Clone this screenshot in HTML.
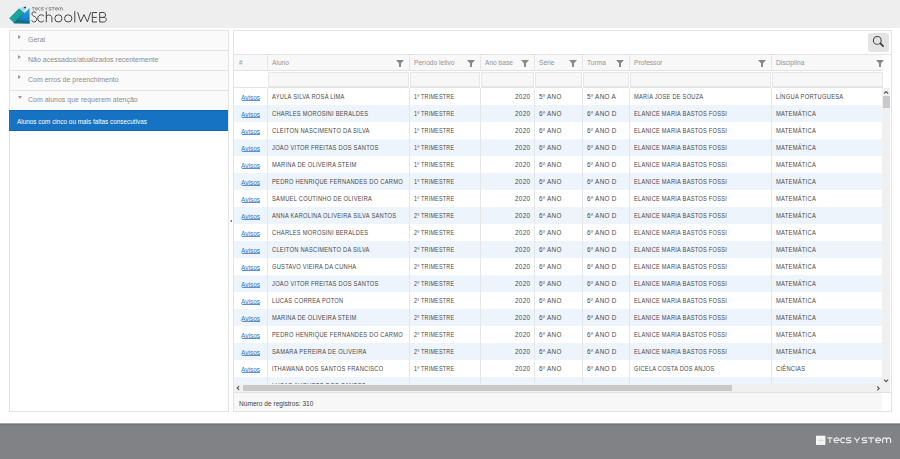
<!DOCTYPE html><html><head><meta charset="utf-8"><style>*{margin:0;padding:0;box-sizing:border-box}
html,body{width:900px;height:459px;overflow:hidden;background:#fff;font-family:"Liberation Sans",sans-serif;position:relative}
#hdr{position:absolute;left:0;top:0;width:900px;height:28px;background:#eeeeee}
#hdr svg{position:absolute;left:0;top:0}
#ts{position:absolute;left:32px;top:6px;font-size:4px;letter-spacing:0.6px;color:#555;line-height:5px}
#sw{position:absolute;left:31px;top:8px;font-size:15px;line-height:17px;color:#444;letter-spacing:-0.3px}
#sw span{margin-left:2px}
#lp{position:absolute;left:9px;top:30px;width:220px;height:382px;border:1px solid #e3e3e3;background:#fff}
.it{position:absolute;left:0;width:218px;height:20px;background:#fafafa;border-bottom:1px solid #e3e3e3;font-size:8px;color:#8c8c8c;line-height:19px}
.it span{position:absolute;left:18px;top:-1px;white-space:nowrap;transform:scaleX(0.875);transform-origin:0 50%}
.it i{position:absolute;left:8px;top:4px;width:0;height:0}
.it i.rt{border-left:3.2px solid #9a9a9a;border-top:2.85px solid transparent;border-bottom:2.85px solid transparent}
.it i.dn{top:4.6px;left:8px;border-top:3.1px solid #9a9a9a;border-left:2.7px solid transparent;border-right:2.7px solid transparent}
.sel{position:absolute;left:-1px;top:79px;width:219px;height:21px;background:#1672c2;border-top:1px solid #1266b4;border-bottom:1px solid #1266b4;color:#fff;font-size:6.4px;line-height:19px;padding-left:8px;padding-top:1px}
#spl{position:absolute;left:229.5px;top:220.3px;width:0;height:0;border-right:2.6px solid #444;border-top:1.5px solid transparent;border-bottom:1.5px solid transparent}
#rp{position:absolute;left:233px;top:30px;width:659px;height:382px;border:1px solid #e3e3e3;background:#fff}
#srch{position:absolute;left:634px;top:2px;width:21px;height:19px;background:#e4e4e4;border-radius:3px}
#srch svg{position:absolute;left:0;top:0}
.hc{position:absolute;top:54px;height:17px;background:#f8f8f8;border-top:1px solid #e2e2e2;border-bottom:1px solid #e2e2e2;font-size:6.9px;color:#939393;line-height:15px;padding-left:4px;white-space:nowrap}
.hc span{display:inline-block;transform:scaleX(0.96);transform-origin:0 50%}
.fl{position:absolute;top:5px;width:8px;height:7px;background:#868686;clip-path:polygon(0 0,100% 0,62% 45%,62% 100%,38% 100%,38% 45%)}
.fc{position:absolute;top:71px;height:17px;border-bottom:1px solid #e2e2e2}
.fc::after{content:"";position:absolute;left:0;right:0;top:1px;bottom:0;background:#f7f7f7;border:1px solid #e7e7e7}
.fc.e::after{display:none}
.vs{position:absolute;top:0;width:1px;height:296px;background:#e6e6e6}
.vs.h{top:54px;height:17px;background:#e6e6e6}
#body{position:absolute;left:234px;top:88px;width:648px;height:296px;overflow:hidden}
.row{position:absolute;left:0;width:648px;height:17px;background:#fff}
.row.alt{background:#edf4fb}
.row a{position:absolute;top:0;height:17px;text-align:center;color:#2f74c4;text-decoration:none;font-size:6.5px;line-height:17px;padding-top:1px}
.row a::after{content:'';position:absolute;left:8px;width:18px;top:12px;height:0.8px;background:#5a8fd0}
.c{position:absolute;top:0;height:17px;font-size:6.8px;line-height:17px;color:#484848;padding-left:4px;white-space:nowrap;overflow:hidden}
.c span{display:inline-block;letter-spacing:0.3px;transform:scaleX(0.9);transform-origin:0 50%}
.c.r{text-align:right;padding-left:0;padding-right:4px}
.c.r span{transform-origin:100% 50%}
#vsb{position:absolute;left:882px;top:88px;width:8px;height:304px;background:#f0f0f0}
#vsb .th{position:absolute;left:1px;top:8px;width:7px;height:12px;background:#c9c9c9}
#hsb{position:absolute;left:234px;top:384px;width:648px;height:8px;background:#f0f0f0}
#hsb .th{position:absolute;left:9px;top:1px;width:489px;height:6px;background:#c9c9c9}
#ftr{position:absolute;left:234px;top:392px;width:657px;height:19px;background:linear-gradient(90deg,#f7f7f7 648px,#fff 648px);border-top:1px solid #e2e2e2;font-size:6.6px;color:#444;line-height:19px;padding-left:5px;padding-top:1px}
#pf{position:absolute;left:0;top:423px;width:900px;height:36px;background:linear-gradient(180deg,#a6a7a9 0,#a6a7a9 1px,#747578 1px,#747578 2px,#818286 2px)}
#tsq{position:absolute;left:816px;top:12px;width:10px;height:10px;background:#f2f2f2}
#tst{position:absolute;left:829px;top:12px;font-size:9px;line-height:10px;color:#e8e8e8;letter-spacing:0.8px}

#tbl{position:absolute;left:234px;top:54px;width:657px;height:1px;background:#e2e2e2}
#vsb i{position:absolute;left:2px;width:4px;height:4px;border-left:1.2px solid #555;border-top:1.2px solid #555}
#vsb i.up{top:3px;transform:rotate(45deg)}
#vsb i.dn2{top:290px;transform:rotate(225deg)}
#hsb i{position:absolute;top:2px;width:4px;height:4px;border-left:1.2px solid #555;border-top:1.2px solid #555}
#hsb i.lf{left:3px;transform:rotate(-45deg)}
#hsb i.rg{left:642px;transform:rotate(135deg)}

#ov{position:absolute;left:0;top:0;pointer-events:none}
</style></head><body>
<div id="hdr"><svg width="120" height="28" viewBox="0 0 120 28" style="position:absolute;left:0;top:0">
<defs><linearGradient id="bg1" x1="0" y1="0" x2="0" y2="1"><stop offset="0" stop-color="#27a6e8"/><stop offset="1" stop-color="#0e6fbf"/></linearGradient></defs>
<polygon points="13.6,23.2 24.6,12.9 29.6,8 29.6,23.4" fill="url(#bg1)"/>
<polygon points="13.6,23.2 16.5,20.4 22,20.3 29.6,20.9 29.6,23.4" fill="#126e80"/>
<polygon points="9.2,18.2 19.1,8.2 24.4,12.8 14,22.9" fill="#18a39c"/>
<path d="M24.4,12.8 L14,22.9" stroke="#0b4d5a" stroke-width="0.7"/>
<polygon points="19.2,8.1 25.5,6.8 24.5,12.8" fill="#a5dcf5"/>
<polygon points="23.4,7.2 26.2,6.6 25.5,8.7" fill="#0b3438"/>
<g fill="none" stroke="#383838" stroke-width="0.92">
<path d="M36.3,13.1 C35.8,12.2 35,11.8 34,11.8 C32.8,11.8 32,12.6 32,13.8 C32,15.2 33.1,15.8 34.3,16.4 C35.7,17.1 36.6,17.9 36.6,19.5 C36.6,21 35.5,21.9 34.1,21.9 C32.9,21.9 32,21.2 31.6,20.2"/>
<path d="M44,16.2 A3.5,3.6 0 1 0 44,20.6"/>
<path d="M46.3,11.2 V22.3 M46.3,17.6 C46.3,15.9 47.4,15 48.9,15 C50.6,15 51.9,15.9 51.9,17.9 V22.3"/>
<ellipse cx="58.4" cy="18.4" rx="3.6" ry="3.6"/>
<ellipse cx="68.2" cy="18.4" rx="3.7" ry="3.6"/>
<path d="M74.8,11.2 V22.4"/>
<path d="M77.7,12.2 L80.7,21.9 L84,14.6 L87.4,21.9 L90.7,12.2"/>
<path d="M97,12.5 H92.3 V22 H97 M92.3,17.4 H96.8"/>
<path d="M99.7,12.5 V22 H103.2 C105.2,22 106.3,21 106.3,19.5 C106.3,18.1 105.2,17.4 103.3,17.4 H99.7 M103,17.4 C104.6,17.4 105.5,16.5 105.5,15 C105.5,13.4 104.5,12.5 103,12.5 H99.7"/>
</g>
<g fill="none" stroke="#6a6a6a" stroke-width="0.62" transform="matrix(0.482 0 0 0.55 -366.76 -233.29)"><path vector-effect="non-scaling-stroke" d="M827.3,437.8 H832.5 M829.9,437.8 V443.1"/><path vector-effect="non-scaling-stroke" d="M834,440.3 H839.1 A2.55,2.45 0 1 0 838.3,442.1"/><path vector-effect="non-scaling-stroke" d="M844.9,438.6 A2.45,2.45 0 1 0 844.9,441.9"/><path vector-effect="non-scaling-stroke" d="M851.1,437.8 H847.9 C846.9,437.8 846.3,438.4 846.3,439.1 C846.3,439.8 846.9,440.3 847.9,440.3 H849.6 C850.6,440.3 851.1,440.9 851.1,441.5 C851.1,442.1 850.6,442.6 849.6,442.6 H846.1"/><path vector-effect="non-scaling-stroke" d="M854.2,437.6 L857,440.6 L859.8,437.6 M857,440.6 V443.1"/><path vector-effect="non-scaling-stroke" d="M866.9,437.8 H863.7 C862.7,437.8 862.1,438.4 862.1,439.1 C862.1,439.8 862.7,440.3 863.7,440.3 H865.4 C866.4,440.3 866.9,440.9 866.9,441.5 C866.9,442.1 866.4,442.6 865.4,442.6 H861.9"/><path vector-effect="non-scaling-stroke" d="M868,437.8 H874.3 M871.1,437.8 V443.1"/><path vector-effect="non-scaling-stroke" d="M875.6,440.3 H880.7 A2.55,2.45 0 1 0 879.9,442.1"/><path vector-effect="non-scaling-stroke" d="M882.6,443.1 V440.1 C882.6,438.7 883.4,437.8 884.6,437.8 C885.8,437.8 886.6,438.7 886.6,440.1 V443.1 M886.6,440.1 C886.6,438.7 887.4,437.8 888.6,437.8 C889.8,437.8 890.6,438.7 890.6,440.1 V443.1"/></g>
</svg>
</div>
<div id="lp">
<div class="it" style="top:0px"><i class="rt"></i><span>Geral</span></div>
<div class="it" style="top:20px"><i class="rt"></i><span>Não acessados/atualizados recentemente</span></div>
<div class="it" style="top:40px"><i class="rt"></i><span>Com erros de preenchimento</span></div>
<div class="it" style="top:60px"><i class="dn"></i><span>Com alunos que requerem atenção</span></div>
<div class="sel">Alunos com cinco ou mais faltas consecutivas</div>
</div>
<div id="spl"></div>
<div id="rp">
<div id="srch"><svg width="21" height="19" viewBox="0 0 21 19"><circle cx="9.3" cy="7.4" r="3.9" fill="none" stroke="#444" stroke-width="1.05"/><path d="M7,5.6 A2.4,2.4 0 0 1 8.6,4.9" stroke="#aaa" stroke-width="0.7" fill="none"/><path d="M12.4,10.4 L15.1,13.1" stroke="#3a3a3a" stroke-width="1.7" stroke-linecap="round"/></svg></div>
</div>
<div class="hc" style="left:234px;width:33px;padding-left:5px;font-size:6.4px"><span>#</span></div>
<div class="fc e" style="left:234px;width:33px"></div>
<div class="hc" style="left:268px;width:141px"><span>Aluno</span><b class="fl" style="left:128px"></b></div>
<div class="fc" style="left:268px;width:141px"></div>
<div class="hc" style="left:410px;width:70px"><span>Período letivo</span><b class="fl" style="left:57px"></b></div>
<div class="fc" style="left:410px;width:70px"></div>
<div class="hc" style="left:481px;width:53px"><span>Ano base</span><b class="fl" style="left:40px"></b></div>
<div class="fc" style="left:481px;width:53px"></div>
<div class="hc" style="left:535px;width:47px"><span>Série</span><b class="fl" style="left:34px"></b></div>
<div class="fc" style="left:535px;width:47px"></div>
<div class="hc" style="left:583px;width:46px"><span>Turma</span><b class="fl" style="left:33px"></b></div>
<div class="fc" style="left:583px;width:46px"></div>
<div class="hc" style="left:630px;width:141px"><span>Professor</span><b class="fl" style="left:128px"></b></div>
<div class="fc" style="left:630px;width:141px"></div>
<div class="hc" style="left:772px;width:111px"><span>Disciplina</span><b class="fl" style="left:104px"></b></div>
<div class="fc" style="left:772px;width:111px"></div>
<div class="vs h" style="left:267px"></div>
<div class="vs h" style="left:409px"></div>
<div class="vs h" style="left:480px"></div>
<div class="vs h" style="left:534px"></div>
<div class="vs h" style="left:582px"></div>
<div class="vs h" style="left:629px"></div>
<div class="vs h" style="left:771px"></div>
<div id="body">
<div class="row" style="top:0px">
<a style="left:0;width:33px">Avisos</a>
<div class="c" style="left:34px;width:141px"><span style="transform:scaleX(0.845)">AYULA SILVA ROSA LIMA</span></div>
<div class="c" style="left:176px;width:70px"><span style="transform:scaleX(0.79)">1º TRIMESTRE</span></div>
<div class="c r" style="left:247px;width:53px"><span style="transform:scaleX(0.94)">2020</span></div>
<div class="c" style="left:301px;width:47px"><span style="transform:scaleX(0.93)">5º ANO</span></div>
<div class="c" style="left:349px;width:46px"><span style="transform:scaleX(0.935)">5º ANO A</span></div>
<div class="c" style="left:396px;width:141px"><span style="transform:scaleX(0.835)">MARIA JOSE DE SOUZA</span></div>
<div class="c" style="left:538px;width:110px"><span style="transform:scaleX(0.85)">LÍNGUA PORTUGUESA</span></div>
</div>
<div class="row alt" style="top:17px">
<a style="left:0;width:33px">Avisos</a>
<div class="c" style="left:34px;width:141px"><span style="transform:scaleX(0.845)">CHARLES MOROSINI BERALDES</span></div>
<div class="c" style="left:176px;width:70px"><span style="transform:scaleX(0.79)">1º TRIMESTRE</span></div>
<div class="c r" style="left:247px;width:53px"><span style="transform:scaleX(0.94)">2020</span></div>
<div class="c" style="left:301px;width:47px"><span style="transform:scaleX(0.93)">6º ANO</span></div>
<div class="c" style="left:349px;width:46px"><span style="transform:scaleX(0.935)">6º ANO D</span></div>
<div class="c" style="left:396px;width:141px"><span style="transform:scaleX(0.835)">ELANICE MARIA BASTOS FOSSI</span></div>
<div class="c" style="left:538px;width:110px"><span style="transform:scaleX(0.85)">MATEMÁTICA</span></div>
</div>
<div class="row" style="top:34px">
<a style="left:0;width:33px">Avisos</a>
<div class="c" style="left:34px;width:141px"><span style="transform:scaleX(0.845)">CLEITON NASCIMENTO DA SILVA</span></div>
<div class="c" style="left:176px;width:70px"><span style="transform:scaleX(0.79)">1º TRIMESTRE</span></div>
<div class="c r" style="left:247px;width:53px"><span style="transform:scaleX(0.94)">2020</span></div>
<div class="c" style="left:301px;width:47px"><span style="transform:scaleX(0.93)">6º ANO</span></div>
<div class="c" style="left:349px;width:46px"><span style="transform:scaleX(0.935)">6º ANO D</span></div>
<div class="c" style="left:396px;width:141px"><span style="transform:scaleX(0.835)">ELANICE MARIA BASTOS FOSSI</span></div>
<div class="c" style="left:538px;width:110px"><span style="transform:scaleX(0.85)">MATEMÁTICA</span></div>
</div>
<div class="row alt" style="top:51px">
<a style="left:0;width:33px">Avisos</a>
<div class="c" style="left:34px;width:141px"><span style="transform:scaleX(0.845)">JOAO VITOR FREITAS DOS SANTOS</span></div>
<div class="c" style="left:176px;width:70px"><span style="transform:scaleX(0.79)">1º TRIMESTRE</span></div>
<div class="c r" style="left:247px;width:53px"><span style="transform:scaleX(0.94)">2020</span></div>
<div class="c" style="left:301px;width:47px"><span style="transform:scaleX(0.93)">6º ANO</span></div>
<div class="c" style="left:349px;width:46px"><span style="transform:scaleX(0.935)">6º ANO D</span></div>
<div class="c" style="left:396px;width:141px"><span style="transform:scaleX(0.835)">ELANICE MARIA BASTOS FOSSI</span></div>
<div class="c" style="left:538px;width:110px"><span style="transform:scaleX(0.85)">MATEMÁTICA</span></div>
</div>
<div class="row" style="top:68px">
<a style="left:0;width:33px">Avisos</a>
<div class="c" style="left:34px;width:141px"><span style="transform:scaleX(0.845)">MARINA DE OLIVEIRA STEIM</span></div>
<div class="c" style="left:176px;width:70px"><span style="transform:scaleX(0.79)">1º TRIMESTRE</span></div>
<div class="c r" style="left:247px;width:53px"><span style="transform:scaleX(0.94)">2020</span></div>
<div class="c" style="left:301px;width:47px"><span style="transform:scaleX(0.93)">6º ANO</span></div>
<div class="c" style="left:349px;width:46px"><span style="transform:scaleX(0.935)">6º ANO D</span></div>
<div class="c" style="left:396px;width:141px"><span style="transform:scaleX(0.835)">ELANICE MARIA BASTOS FOSSI</span></div>
<div class="c" style="left:538px;width:110px"><span style="transform:scaleX(0.85)">MATEMÁTICA</span></div>
</div>
<div class="row alt" style="top:85px">
<a style="left:0;width:33px">Avisos</a>
<div class="c" style="left:34px;width:141px"><span style="transform:scaleX(0.845)">PEDRO HENRIQUE FERNANDES DO CARMO</span></div>
<div class="c" style="left:176px;width:70px"><span style="transform:scaleX(0.79)">1º TRIMESTRE</span></div>
<div class="c r" style="left:247px;width:53px"><span style="transform:scaleX(0.94)">2020</span></div>
<div class="c" style="left:301px;width:47px"><span style="transform:scaleX(0.93)">6º ANO</span></div>
<div class="c" style="left:349px;width:46px"><span style="transform:scaleX(0.935)">6º ANO D</span></div>
<div class="c" style="left:396px;width:141px"><span style="transform:scaleX(0.835)">ELANICE MARIA BASTOS FOSSI</span></div>
<div class="c" style="left:538px;width:110px"><span style="transform:scaleX(0.85)">MATEMÁTICA</span></div>
</div>
<div class="row" style="top:102px">
<a style="left:0;width:33px">Avisos</a>
<div class="c" style="left:34px;width:141px"><span style="transform:scaleX(0.845)">SAMUEL COUTINHO DE OLIVEIRA</span></div>
<div class="c" style="left:176px;width:70px"><span style="transform:scaleX(0.79)">1º TRIMESTRE</span></div>
<div class="c r" style="left:247px;width:53px"><span style="transform:scaleX(0.94)">2020</span></div>
<div class="c" style="left:301px;width:47px"><span style="transform:scaleX(0.93)">6º ANO</span></div>
<div class="c" style="left:349px;width:46px"><span style="transform:scaleX(0.935)">6º ANO D</span></div>
<div class="c" style="left:396px;width:141px"><span style="transform:scaleX(0.835)">ELANICE MARIA BASTOS FOSSI</span></div>
<div class="c" style="left:538px;width:110px"><span style="transform:scaleX(0.85)">MATEMÁTICA</span></div>
</div>
<div class="row alt" style="top:119px">
<a style="left:0;width:33px">Avisos</a>
<div class="c" style="left:34px;width:141px"><span style="transform:scaleX(0.845)">ANNA KAROLINA OLIVEIRA SILVA SANTOS</span></div>
<div class="c" style="left:176px;width:70px"><span style="transform:scaleX(0.79)">2º TRIMESTRE</span></div>
<div class="c r" style="left:247px;width:53px"><span style="transform:scaleX(0.94)">2020</span></div>
<div class="c" style="left:301px;width:47px"><span style="transform:scaleX(0.93)">6º ANO</span></div>
<div class="c" style="left:349px;width:46px"><span style="transform:scaleX(0.935)">6º ANO D</span></div>
<div class="c" style="left:396px;width:141px"><span style="transform:scaleX(0.835)">ELANICE MARIA BASTOS FOSSI</span></div>
<div class="c" style="left:538px;width:110px"><span style="transform:scaleX(0.85)">MATEMÁTICA</span></div>
</div>
<div class="row" style="top:136px">
<a style="left:0;width:33px">Avisos</a>
<div class="c" style="left:34px;width:141px"><span style="transform:scaleX(0.845)">CHARLES MOROSINI BERALDES</span></div>
<div class="c" style="left:176px;width:70px"><span style="transform:scaleX(0.79)">2º TRIMESTRE</span></div>
<div class="c r" style="left:247px;width:53px"><span style="transform:scaleX(0.94)">2020</span></div>
<div class="c" style="left:301px;width:47px"><span style="transform:scaleX(0.93)">6º ANO</span></div>
<div class="c" style="left:349px;width:46px"><span style="transform:scaleX(0.935)">6º ANO D</span></div>
<div class="c" style="left:396px;width:141px"><span style="transform:scaleX(0.835)">ELANICE MARIA BASTOS FOSSI</span></div>
<div class="c" style="left:538px;width:110px"><span style="transform:scaleX(0.85)">MATEMÁTICA</span></div>
</div>
<div class="row alt" style="top:153px">
<a style="left:0;width:33px">Avisos</a>
<div class="c" style="left:34px;width:141px"><span style="transform:scaleX(0.845)">CLEITON NASCIMENTO DA SILVA</span></div>
<div class="c" style="left:176px;width:70px"><span style="transform:scaleX(0.79)">2º TRIMESTRE</span></div>
<div class="c r" style="left:247px;width:53px"><span style="transform:scaleX(0.94)">2020</span></div>
<div class="c" style="left:301px;width:47px"><span style="transform:scaleX(0.93)">6º ANO</span></div>
<div class="c" style="left:349px;width:46px"><span style="transform:scaleX(0.935)">6º ANO D</span></div>
<div class="c" style="left:396px;width:141px"><span style="transform:scaleX(0.835)">ELANICE MARIA BASTOS FOSSI</span></div>
<div class="c" style="left:538px;width:110px"><span style="transform:scaleX(0.85)">MATEMÁTICA</span></div>
</div>
<div class="row" style="top:170px">
<a style="left:0;width:33px">Avisos</a>
<div class="c" style="left:34px;width:141px"><span style="transform:scaleX(0.845)">GUSTAVO VIEIRA DA CUNHA</span></div>
<div class="c" style="left:176px;width:70px"><span style="transform:scaleX(0.79)">2º TRIMESTRE</span></div>
<div class="c r" style="left:247px;width:53px"><span style="transform:scaleX(0.94)">2020</span></div>
<div class="c" style="left:301px;width:47px"><span style="transform:scaleX(0.93)">6º ANO</span></div>
<div class="c" style="left:349px;width:46px"><span style="transform:scaleX(0.935)">6º ANO D</span></div>
<div class="c" style="left:396px;width:141px"><span style="transform:scaleX(0.835)">ELANICE MARIA BASTOS FOSSI</span></div>
<div class="c" style="left:538px;width:110px"><span style="transform:scaleX(0.85)">MATEMÁTICA</span></div>
</div>
<div class="row alt" style="top:187px">
<a style="left:0;width:33px">Avisos</a>
<div class="c" style="left:34px;width:141px"><span style="transform:scaleX(0.845)">JOAO VITOR FREITAS DOS SANTOS</span></div>
<div class="c" style="left:176px;width:70px"><span style="transform:scaleX(0.79)">2º TRIMESTRE</span></div>
<div class="c r" style="left:247px;width:53px"><span style="transform:scaleX(0.94)">2020</span></div>
<div class="c" style="left:301px;width:47px"><span style="transform:scaleX(0.93)">6º ANO</span></div>
<div class="c" style="left:349px;width:46px"><span style="transform:scaleX(0.935)">6º ANO D</span></div>
<div class="c" style="left:396px;width:141px"><span style="transform:scaleX(0.835)">ELANICE MARIA BASTOS FOSSI</span></div>
<div class="c" style="left:538px;width:110px"><span style="transform:scaleX(0.85)">MATEMÁTICA</span></div>
</div>
<div class="row" style="top:204px">
<a style="left:0;width:33px">Avisos</a>
<div class="c" style="left:34px;width:141px"><span style="transform:scaleX(0.845)">LUCAS CORREA POTON</span></div>
<div class="c" style="left:176px;width:70px"><span style="transform:scaleX(0.79)">2º TRIMESTRE</span></div>
<div class="c r" style="left:247px;width:53px"><span style="transform:scaleX(0.94)">2020</span></div>
<div class="c" style="left:301px;width:47px"><span style="transform:scaleX(0.93)">6º ANO</span></div>
<div class="c" style="left:349px;width:46px"><span style="transform:scaleX(0.935)">6º ANO D</span></div>
<div class="c" style="left:396px;width:141px"><span style="transform:scaleX(0.835)">ELANICE MARIA BASTOS FOSSI</span></div>
<div class="c" style="left:538px;width:110px"><span style="transform:scaleX(0.85)">MATEMÁTICA</span></div>
</div>
<div class="row alt" style="top:221px">
<a style="left:0;width:33px">Avisos</a>
<div class="c" style="left:34px;width:141px"><span style="transform:scaleX(0.845)">MARINA DE OLIVEIRA STEIM</span></div>
<div class="c" style="left:176px;width:70px"><span style="transform:scaleX(0.79)">2º TRIMESTRE</span></div>
<div class="c r" style="left:247px;width:53px"><span style="transform:scaleX(0.94)">2020</span></div>
<div class="c" style="left:301px;width:47px"><span style="transform:scaleX(0.93)">6º ANO</span></div>
<div class="c" style="left:349px;width:46px"><span style="transform:scaleX(0.935)">6º ANO D</span></div>
<div class="c" style="left:396px;width:141px"><span style="transform:scaleX(0.835)">ELANICE MARIA BASTOS FOSSI</span></div>
<div class="c" style="left:538px;width:110px"><span style="transform:scaleX(0.85)">MATEMÁTICA</span></div>
</div>
<div class="row" style="top:238px">
<a style="left:0;width:33px">Avisos</a>
<div class="c" style="left:34px;width:141px"><span style="transform:scaleX(0.845)">PEDRO HENRIQUE FERNANDES DO CARMO</span></div>
<div class="c" style="left:176px;width:70px"><span style="transform:scaleX(0.79)">2º TRIMESTRE</span></div>
<div class="c r" style="left:247px;width:53px"><span style="transform:scaleX(0.94)">2020</span></div>
<div class="c" style="left:301px;width:47px"><span style="transform:scaleX(0.93)">6º ANO</span></div>
<div class="c" style="left:349px;width:46px"><span style="transform:scaleX(0.935)">6º ANO D</span></div>
<div class="c" style="left:396px;width:141px"><span style="transform:scaleX(0.835)">ELANICE MARIA BASTOS FOSSI</span></div>
<div class="c" style="left:538px;width:110px"><span style="transform:scaleX(0.85)">MATEMÁTICA</span></div>
</div>
<div class="row alt" style="top:255px">
<a style="left:0;width:33px">Avisos</a>
<div class="c" style="left:34px;width:141px"><span style="transform:scaleX(0.845)">SAMARA PEREIRA DE OLIVEIRA</span></div>
<div class="c" style="left:176px;width:70px"><span style="transform:scaleX(0.79)">2º TRIMESTRE</span></div>
<div class="c r" style="left:247px;width:53px"><span style="transform:scaleX(0.94)">2020</span></div>
<div class="c" style="left:301px;width:47px"><span style="transform:scaleX(0.93)">6º ANO</span></div>
<div class="c" style="left:349px;width:46px"><span style="transform:scaleX(0.935)">6º ANO D</span></div>
<div class="c" style="left:396px;width:141px"><span style="transform:scaleX(0.835)">ELANICE MARIA BASTOS FOSSI</span></div>
<div class="c" style="left:538px;width:110px"><span style="transform:scaleX(0.85)">MATEMÁTICA</span></div>
</div>
<div class="row" style="top:272px">
<a style="left:0;width:33px">Avisos</a>
<div class="c" style="left:34px;width:141px"><span style="transform:scaleX(0.845)">ITHAWANA DOS SANTOS FRANCISCO</span></div>
<div class="c" style="left:176px;width:70px"><span style="transform:scaleX(0.79)">1º TRIMESTRE</span></div>
<div class="c r" style="left:247px;width:53px"><span style="transform:scaleX(0.94)">2020</span></div>
<div class="c" style="left:301px;width:47px"><span style="transform:scaleX(0.93)">6º ANO</span></div>
<div class="c" style="left:349px;width:46px"><span style="transform:scaleX(0.935)">6º ANO D</span></div>
<div class="c" style="left:396px;width:141px"><span style="transform:scaleX(0.835)">GICELA COSTA DOS ANJOS</span></div>
<div class="c" style="left:538px;width:110px"><span style="transform:scaleX(0.85)">CIÊNCIAS</span></div>
</div>
<div class="row alt" style="top:289px">
<div class="c" style="left:34px;width:141px"><span style="transform:scaleX(0.845)">LUCAS AUGUSTO DOS SANTOS</span></div>
<div class="c" style="left:176px;width:70px"><span style="transform:scaleX(0.79)"></span></div>
<div class="c r" style="left:247px;width:53px"><span style="transform:scaleX(0.94)"></span></div>
<div class="c" style="left:301px;width:47px"><span style="transform:scaleX(0.93)"></span></div>
<div class="c" style="left:349px;width:46px"><span style="transform:scaleX(0.935)"></span></div>
<div class="c" style="left:396px;width:141px"><span style="transform:scaleX(0.835)"></span></div>
<div class="c" style="left:538px;width:110px"><span style="transform:scaleX(0.85)"></span></div>
</div>
<div class="vs" style="left:33px"></div>
<div class="vs" style="left:175px"></div>
<div class="vs" style="left:246px"></div>
<div class="vs" style="left:300px"></div>
<div class="vs" style="left:348px"></div>
<div class="vs" style="left:395px"></div>
<div class="vs" style="left:537px"></div>
</div>
<div id="tbl"></div>
<div id="vsb"><div class="th"></div></div>
<div id="hsb"><div class="th"></div></div>
<svg id="ov" width="900" height="459" viewBox="0 0 900 459"><g fill="none" stroke="#585858" stroke-width="1.15" stroke-linejoin="miter"><path d="M884.1,93.5 L886.1,91.5 L888.1,93.5"/><path d="M884.1,379.6 L886.1,381.6 L888.1,379.6"/><path d="M239.1,386.1 L237.2,388 L239.1,389.9"/><path d="M877.3,386.5 L879.2,388.4 L877.3,390.3"/></g></svg>
<div id="ftr">Número de registros: 310</div>
<div id="pf"><svg width="900" height="36" viewBox="0 423 900 36" style="position:absolute;left:0;top:0"><rect x="816" y="435.7" width="9.4" height="9.2" fill="#f6f6f6"/><path d="M817.5,440.4 H824.3 M819.8,438.8 A1.6,1.6 0 0 1 819.8,442" stroke="#c9c9c9" stroke-width="0.6" fill="none"/><g fill="none" stroke="#ebebeb" stroke-width="1.15"><path d="M827.3,437.8 H832.5 M829.9,437.8 V443.1"/><path d="M834,440.3 H839.1 A2.55,2.45 0 1 0 838.3,442.1"/><path d="M844.9,438.6 A2.45,2.45 0 1 0 844.9,441.9"/><path d="M851.1,437.8 H847.9 C846.9,437.8 846.3,438.4 846.3,439.1 C846.3,439.8 846.9,440.3 847.9,440.3 H849.6 C850.6,440.3 851.1,440.9 851.1,441.5 C851.1,442.1 850.6,442.6 849.6,442.6 H846.1"/><path d="M854.2,437.6 L857,440.6 L859.8,437.6 M857,440.6 V443.1"/><path d="M866.9,437.8 H863.7 C862.7,437.8 862.1,438.4 862.1,439.1 C862.1,439.8 862.7,440.3 863.7,440.3 H865.4 C866.4,440.3 866.9,440.9 866.9,441.5 C866.9,442.1 866.4,442.6 865.4,442.6 H861.9"/><path d="M868,437.8 H874.3 M871.1,437.8 V443.1"/><path d="M875.6,440.3 H880.7 A2.55,2.45 0 1 0 879.9,442.1"/><path d="M882.6,443.1 V440.1 C882.6,438.7 883.4,437.8 884.6,437.8 C885.8,437.8 886.6,438.7 886.6,440.1 V443.1 M886.6,440.1 C886.6,438.7 887.4,437.8 888.6,437.8 C889.8,437.8 890.6,438.7 890.6,440.1 V443.1"/></g></svg></div>
</body></html>
